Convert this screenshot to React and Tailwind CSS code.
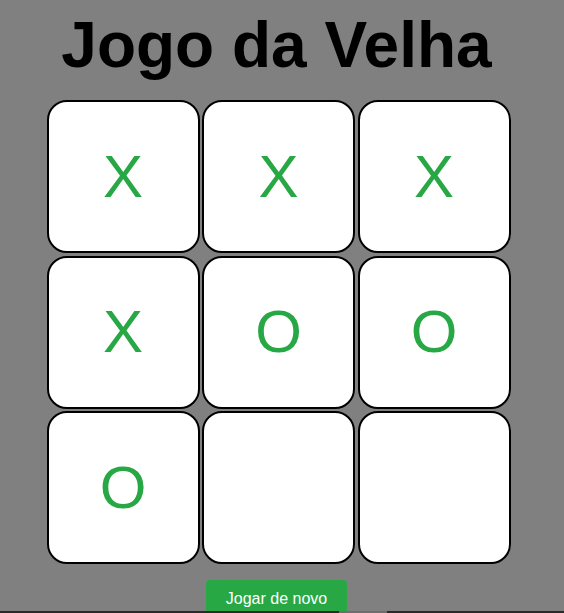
const board = ['X', 'X', 'X', 'X', 'O', 'O', 'O', '', ''];

function Cell({ value }) {
  return (
    <button className="w-[153px] h-[153px] bg-white border-2 border-black rounded-[20px] flex items-center justify-center text-[60px] leading-none text-[#28a745]">
      {value}
    </button>
  );
}

export default function App() {
  return (
    <div className="min-h-[613px] bg-[#808080] font-['Liberation_Sans',Arial,sans-serif] flex flex-col items-center pr-[11px]">
      {/* Title */}
      <h1 className="mt-[13px] text-[64px] leading-none font-bold text-black">Jogo da Velha</h1>

      {/* Board */}
      <div className="mt-[23px] grid grid-cols-[repeat(3,153px)] gap-[2.5px] ml-[4px]">
        {board.map((v, i) => (
          <Cell key={i} value={v} />
        ))}
      </div>

      <button className="mt-[16px] bg-[#28a745] text-white text-[16px] leading-[18px] px-5 py-[10px] rounded-[4px]">
        Jogar de novo
      </button>

      {/* bottom edge strip */}
      <div className="fixed z-10 bottom-0 left-0 right-0 h-[2px] bg-[#2a2a2a] flex">
        <div className="ml-[339px] w-[48px] bg-[#6e6e6e]" />
      </div>
    </div>
  );
}
